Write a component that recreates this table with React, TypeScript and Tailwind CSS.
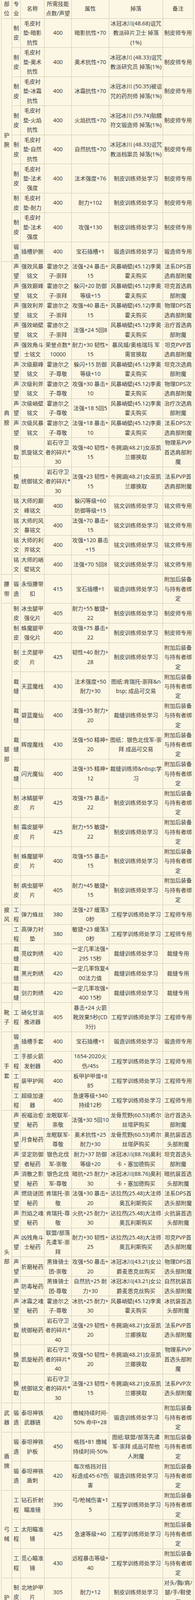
import React from 'react';

type Row = { p?: [string, number]; c: string[] };

const BIND = '附加后装备\n与持有者绑\n定';
const STORM = '风暴峭壁(45.12)李奥\n霍夫购买';
const WINTER = '冬拥湖(48.21)女巫凯\n兰娜换取';
const DALARAN = '达拉然(25.48)大法师\n奥瓦利斯购买';

const header = ['部\n位', '专\n业', '名称', '所需技能\n点数/声望', '属性', '掉落', '备注'];

const rows: Row[] = [
  // 护腕
  { p: ['护\n腕', 9], c: ['制\n皮', '毛皮衬\n垫-暗影\n抗性', '400', '暗影抗性+70', '冰冠冰川(48.68)诅咒\n教派碎片卫士 掉落\n(1%)', '制皮师专用'] },
  { c: ['制\n皮', '毛皮衬\n垫-奥术\n抗性', '400', '奥术抗性+70', '冰冠冰川 (48.33)诅咒\n教派研究员 掉落(1%)', '制皮师专用'] },
  { c: ['制\n皮', '毛皮衬\n垫-冰霜\n抗性', '400', '冰霜抗性+70', '冰冠冰川 (50.35)被诅\n咒的药剂师 掉落(1%)', '制皮师专用'] },
  { c: ['制\n皮', '毛皮衬\n垫-火焰\n抗性', '400', '火焰抗性+70', '冰冠冰川 (59.74)骷髅\n符文锻造师 掉落(1%)', '制皮师专用'] },
  { c: ['制\n皮', '毛皮衬\n垫-自然\n抗性', '400', '自然抗性+70', '冰冠冰川 (48.33)诅咒\n教派档案员 掉落(1%)', '制皮师专用'] },
  { c: ['制\n皮', '毛皮衬\n垫-法术\n强度', '400', '法术强度+76', '制皮训练师处学习', '制皮师专用'] },
  { c: ['制\n皮', '毛皮衬\n垫-耐力', '400', '耐力+102', '制皮训练师处学习', '制皮师专用'] },
  { c: ['制\n皮', '毛皮衬\n垫-法术\n强度', '400', '攻强+130', '制皮训练师处学习', '制皮师专用'] },
  { c: ['锻\n造', '插槽护腕', '400', '宝石插槽+1', '锻造训练师处学习', '锻造师专用'] },
  // 肩膀
  { p: ['肩\n膀', 15], c: ['声\n望', '强效风暴\n铭文', '霍迪尔之\n子-崇拜', '法强+24 暴击+\n15', STORM, '法系DPS首\n选肩部附魔'] },
  { c: ['声\n望', '强效巅峰\n铭文', '霍迪尔之\n子-崇拜', '躲闪+20 防御\n等级+15', STORM, '坦克首选肩\n部附魔'] },
  { c: ['声\n望', '强效利斧\n铭文', '霍迪尔之\n子-崇拜', '攻强+40 暴击+\n15', STORM, '物理DPS首\n选肩部附魔'] },
  { c: ['声\n望', '强效峭壁\n铭文', '霍迪尔之\n子-崇拜', '法强+24 5回8', STORM, '治疗首选肩\n部附魔'] },
  { c: ['声\n望', '强效角斗\n士铭文', '荣誉点数*\n10000', '耐力+30 韧性+\n15', '暴风城/奥格瑞玛 军\n需官换取', '坦克PVP首\n选肩部附魔'] },
  { c: ['声\n望', '次级巅峰\n铭文', '霍迪尔之\n子-尊敬', '躲闪+15 防御\n等级+10', STORM, '坦克次选肩\n部附魔'] },
  { c: ['声\n望', '次级利斧\n铭文', '霍迪尔之\n子-尊敬', '攻强+30 暴击+\n10', STORM, '物理DPS次\n选肩部附魔'] },
  { c: ['声\n望', '次级峭壁\n铭文', '霍迪尔之\n子-尊敬', '法强+18 5回5', STORM, '治疗次选肩\n部附魔'] },
  { c: ['声\n望', '次级风暴\n铭文', '霍迪尔之\n子-尊敬', '法强+18 暴击+\n10', STORM, '法系DPS次\n选肩部附魔'] },
  { c: ['换\n取', '凯旋铭文', '岩石守卫\n者的碎片*\n30', '攻强+40 韧性+\n15', WINTER, '物理系PVP\n首选肩部附\n魔'] },
  { c: ['换\n取', '统御铭文', '岩石守卫\n者的碎片*\n30', '法强+23 韧性+\n15', WINTER, '法系PVP首\n选肩部附魔'] },
  { c: ['铭\n文', '大师的巅\n峰铭文', '400', '躲闪等级+60\n防御等级+15', '铭文训练师处学习', '铭文师专用'] },
  { c: ['铭\n文', '大师的风\n暴铭文', '400', '法强+70 暴击+\n15', '铭文训练师处学习', '铭文师专用'] },
  { c: ['铭\n文', '大师的利\n斧铭文', '400', '攻强+120 暴击\n+15', '铭文训练师处学习', '铭文师专用'] },
  { c: ['铭\n文', '大师的峭\n壁铭文', '400', '法强+70 5回8', '铭文训练师处学习', '铭文师专用'] },
  // 腰带
  { p: ['腰\n带', 1], c: ['锻\n造', '永恒腰带\n扣', '415', '宝石插槽+1', '锻造训练师处学习', BIND] },
  // 腿部
  { p: ['腿\n部', 11], c: ['制\n皮', '冰虫腿甲\n强化片', '405', '耐力+55 敏捷+\n22', '制皮训练师处学习', '制皮师专用'] },
  { c: ['制\n皮', '蛛魔腿甲\n强化片', '400', '攻强+75 暴击+\n22', '制皮训练师处学习', '制皮师专用'] },
  { c: ['制\n皮', '土灵腿甲\n片', '425', '韧性+40 耐力+\n28', '制皮训练师处学习', BIND] },
  { c: ['裁\n缝', '天蓝魔线', '430', '法术强度+50\n耐力+30', '图纸:肯瑞托-崇拜&n\nbsp; 成品可交易', BIND] },
  { c: ['裁\n缝', '碧蓝魔仙', '400', '法强+35 耐力+\n20', '裁缝训练师处学习', BIND] },
  { c: ['裁\n缝', '辉煌魔线', '430', '法强+50 精神+\n20', '图纸：银色北伐军-崇\n拜 成品可交易', BIND] },
  { c: ['裁\n缝', '闪光魔仙', '400', '法强+35 精神+\n12', '裁缝训练师&nbsp;学\n习', BIND] },
  { c: ['制\n皮', '冰鳞腿甲\n片', '425', '攻强+75 暴击+\n22', '制皮训练师处学习', BIND] },
  { c: ['制\n皮', '霜皮腿甲\n片', '425', '耐力+55 敏捷+\n22', '制皮训练师处学习', BIND] },
  { c: ['制\n皮', '蛛魔腿甲\n片', '400', '攻强+55 暴击+\n15', '制皮训练师处学习', BIND] },
  { c: ['制\n皮', '病虫腿甲\n片', '405', '耐力+45 敏捷+\n15', '制皮训练师处学习', BIND] },
  // 披风 (following rows have their own empty 部位 cells)
  { p: ['披\n风', 1], c: ['工\n程', '弹力蛛丝', '380', '法强+27 缓落3\n0秒', '工程学训练师处学习', '工程师专用'] },
  { p: ['', 1], c: ['工\n程', '高弹力衬\n垫', '380', '敏捷+23 缓落3\n0秒', '工程学训练师处学习', '工程师专用'] },
  { p: ['', 1], c: ['裁\n缝', '亮纹刺绣', '420', '一定几率法强+\n295 15秒', '裁缝训练师处学习', '裁缝专用'] },
  { p: ['', 1], c: ['裁\n缝', '黑光刺绣', '420', '一定几率恢复4\n00法力值', '裁缝训练师处学习', '裁缝专用'] },
  { p: ['', 1], c: ['裁\n缝', '剑刃刺绣', '420', '一定几率攻强+\n400 15秒', '裁缝训练师处学习', '裁缝专用'] },
  // 靴子
  { p: ['靴\n子', 1], c: ['工\n程', '硝化甘油\n推进器', '405', '暴击+24 火箭\n靴效果5秒(CD\n3分)', '工程学训练师处学习', '工程师专用'] },
  // 手套
  { p: ['手\n套', 4], c: ['锻\n造', '插槽手套', '400', '宝石插槽+1', '锻造训练师处学习', '锻造师专用'] },
  { c: ['工\n程', '手部火箭\n发射器', '400', '1654-2020火\n伤/45s', '工程学训练师处学习', '工程师专用'] },
  { c: ['工\n程', '装甲护网', '400', '板甲护甲值+8\n85', '工程学训练师处学习', '工程师专用'] },
  { c: ['工\n程', '超级加速\n器', '400', '急速等级+340\n持续12秒', '工程学训练师处学习', '工程师专用'] },
  // 头部
  { p: ['头\n部', 13], c: ['声\n望', '祝福治愈\n秘药', '龙眠联军-\n崇敬', '法强+30 5回10', '龙骨荒野(60.53)希尔\n丝塔萨购买', '治疗首选头\n部附魔'] },
  { c: ['声\n望', '月食秘药', '龙眠联军-\n尊敬', '奥术抗性+25\n耐力+30', '龙骨荒野(60.53)希尔\n丝塔萨购买', '奥抗装首选\n头部附魔'] },
  { c: ['声\n望', '坚定防御\n者秘药', '银色北伐\n军-崇敬', '耐力+37 防御\n等级+20', '冰冠冰川(88.76)奥利\n卡・塞加德购买', '坦克首选头\n部附魔'] },
  { c: ['声\n望', '消散之影\n秘药', '银色北伐\n军-尊敬', '暗抗+25 耐力+\n30', '冰冠冰川(88.76)奥利\n卡・塞加德购买', '暗抗装首选\n头部附魔'] },
  { c: ['声\n望', '燃烧谜团\n秘药', '肯瑞托-崇\n敬', '法强+30 暴击+\n20', DALARAN, '法系DPS首\n选头部附魔'] },
  { c: ['声\n望', '烈焰之魂\n秘药', '肯瑞托-尊\n敬', '火抗+25 耐力+\n30', DALARAN, '火抗装首选\n头部附魔'] },
  { c: ['声\n望', '凶残角斗\n士秘药', '联盟/部落\n先遣军-崇\n拜', '耐力+30 韧性+\n25', DALARAN, '坦克PVP首\n选头部附魔'] },
  { c: ['声\n望', '折磨秘药', '黑锋骑士\n团-崇敬', '攻强+50 暴击+\n20', '冰冠冰川(43.21)女公\n爵麦恩克丝购买', '物理DPS首\n选头部附魔'] },
  { c: ['声\n望', '防毒秘药', '黑锋骑士\n团-尊敬', '自然抗+25 耐\n力+30', '冰冠冰川(43.21)女公\n爵麦恩克丝购买', '自然抗装首\n选头部附魔'] },
  { c: ['声\n望', '冰霜之魂\n秘药', '霍迪尔之\n子-尊敬', '冰抗+25 耐力+\n30', STORM, '冰抗装首选\n头部附魔'] },
  { c: ['换\n取', '统御秘药', '岩石守卫\n者的碎片*\n40', '法强+29 韧性+\n20', WINTER, '法系PVP首\n选头部附魔'] },
  { c: ['换\n取', '凯旋秘药', '岩石守卫\n者的碎片*\n40', '攻强+50 韧性+\n20', WINTER, '物理系PVP\n首选头部附\n魔'] },
  { c: ['换\n取', '统御铭文', '岩石守卫\n者的碎片*\n30', '法强+23 韧性+\n15', WINTER, '法系PVP次\n选头部附魔'] },
  // 武器
  { p: ['武\n器', 1], c: ['锻\n造', '泰坦神铁\n武器链', '420', '缴械持续时间-\n50% 命中+28', '锻造训练师处学习', BIND] },
  // 盾牌
  { p: ['盾\n牌', 2], c: ['锻\n造', '泰坦神铁\n护板', '450', '格挡+81 缴械\n持续时间-50%', '图纸:联盟/部落先遣\n军-崇拜 成品可帮他\n人附魔', BIND] },
  { c: ['锻\n造', '泰坦神铁\n盾刺', '420', '每次格挡对目\n标造成45-67伤\n害', '锻造训练师处学习', BIND] },
  // 弓械
  { p: ['弓\n械', 3], c: ['工\n程', '钻石折射\n瞄准镜', '390', '弓/枪械伤害+1\n5', '工程学训练师处学习', BIND] },
  { c: ['工\n程', '太阳瞄准\n镜', '425', '急速等级+40', '工程学训练师处学习', BIND] },
  { c: ['工\n程', '觅心瞄准\n镜', '430', '远程暴击等级+\n40', '工程学训练师处学习', BIND] },
  // 护甲片
  { p: ['护\n甲\n片', 2], c: ['制\n皮', '北地护甲\n片', '305', '耐力+12', '制皮训练师处学习', '对头/胸/肩/\n腿/手/鞋使\n用'] },
  { c: ['制\n皮', '厚北地护\n甲片', '395', '耐力+18', '制皮训练师处学习', '对头/胸/肩/\n腿/手/鞋使\n用'] },
];

// group rows by their 部位 cell
type Group = { label: string; rows: string[][] };
const groups: Group[] = [];
rows.forEach((r) => {
  if (r.p) groups.push({ label: r.p[0], rows: [] });
  groups[groups.length - 1].rows.push(r.c);
});

// widths include the right border
const widths = ['w-[22px]', 'w-[61px]', 'w-[70px]', 'w-[96px]', 'w-[138px]', 'w-[78px]'];
const cellBase = 'shrink-0 flex flex-col justify-center py-[0.2px] border-r border-b border-[#cbc6b1]';

function Lines({ text }: { text: string }) {
  return (
    <>
      {text.split('\n').map((l, i) => (
        <div key={i} className="h-[24.4px] leading-[24.4px] whitespace-pre text-center">
          {l}
        </div>
      ))}
    </>
  );
}

export default function App() {
  return (
    <div
      className="min-h-[4194px] bg-[#fcf7e4] pl-[3px] text-[14.2px] text-[#3b3b3b]"
      style={{ fontFamily: '"Noto Sans", "Noto Sans CJK SC", sans-serif' }}
    >
      <div className="w-[493px] -mt-[3.5px] border-l border-t border-[#cbc6b1]">
        <div className="flex">
          <div className={`${cellBase} w-[27px]`}>
            <Lines text={header[0]} />
          </div>
          {header.slice(1).map((h, i) => (
            <div key={i} className={`${cellBase} ${widths[i]}`}>
              <Lines text={h} />
            </div>
          ))}
        </div>
        {groups.map((g, gi) => (
          <div key={gi} className="flex">
            <div className={`${cellBase} w-[27px]`}>
              <Lines text={g.label} />
            </div>
            <div className="flex flex-col">
              {g.rows.map((c, ri) => (
                <div key={ri} className="flex">
                  {c.map((t, j) => (
                    <div key={j} className={`${cellBase} ${widths[j]}`}>
                      <Lines text={t} />
                    </div>
                  ))}
                </div>
              ))}
            </div>
          </div>
        ))}
      </div>
    </div>
  );
}
